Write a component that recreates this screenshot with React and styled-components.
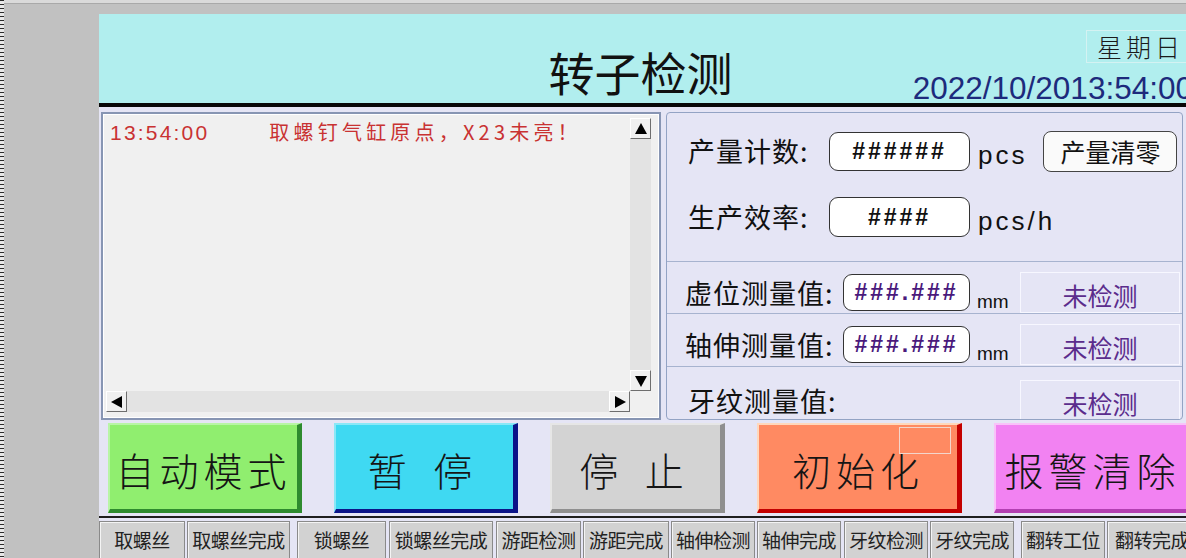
import React from 'react';
import styled, { createGlobalStyle } from 'styled-components';

const GlobalStyle = createGlobalStyle`
  html, body {
    margin: 0;
    padding: 0;
    background: #c1c1c1;
    font-family: "Noto Sans CJK SC", "Liberation Sans", sans-serif;
  }
`;

const Page = styled.div`
  display: flex;
  width: 1186px;
  height: 558px;
  overflow: hidden;
  background: #c1c1c1;
`;

const Ruler = styled.div`
  width: 4px;
  flex-shrink: 0;
  background: repeating-linear-gradient(
    to bottom,
    #2a2a2a 0px,
    #2a2a2a 1px,
    #e8e8e8 1px,
    #e8e8e8 4px
  );
`;

const Desk = styled.div`
  flex: 1;
  display: flex;
  flex-direction: column;
  min-width: 0;
`;

const TopStrip = styled.div`
  height: 3px;
  flex-shrink: 0;
  background: #dadada;
  border-bottom: 1px solid #a9a9a9;
`;

const Screen = styled.div`
  margin: 10px 0 0 95px;
  width: 1087px;
  flex: 1;
  flex-shrink: 0;
  display: flex;
  flex-direction: column;
  background: #e5e5f5;
  min-height: 0;
`;

const Header = styled.div`
  height: 89px;
  flex-shrink: 0;
  background: #b1eeee;
  display: grid;
  grid-template-columns: 1fr auto 1fr;
`;

const Title = styled.div`
  grid-column: 2;
  align-self: end;
  padding: 0 4px 4px 0;
  font-size: 46px;
  line-height: 58px;
  color: #111;
`;

const Clock = styled.div`
  grid-column: 3;
  display: flex;
  flex-direction: column;
  align-items: flex-end;
  padding-top: 16px;
  margin-right: -9px;
`;

const Weekday = styled.div`
  width: 98px;
  height: 31px;
  padding-left: 10px;
  border: 1px solid #d4f2f2;
  border-right: none;
  font-size: 25px;
  font-weight: 300;
  line-height: 31px;
  letter-spacing: 4px;
  color: #1a1a1a;
`;

const DateText = styled.div`
  margin-top: 9px;
  margin-right: 2px;
  font-family: "Liberation Sans", Arial, sans-serif;
  font-size: 31.5px;
  line-height: 32px;
  color: #1d2a7c;
`;

const HeaderBar = styled.div`
  height: 4px;
  flex-shrink: 0;
  background: #080808;
`;

const MainRow = styled.div`
  display: flex;
  gap: 5px;
  height: 308px;
  padding: 5px 0 0 2px;
  flex-shrink: 0;
`;

const LogPanel = styled.div`
  width: 560px;
  flex-shrink: 0;
  box-sizing: border-box;
  border: 2px solid #8795b3;
  box-shadow: inset 0 0 0 1px #ffffff;
  background: #f0f0f0;
  padding: 4px 8px 6px 3px;
  display: grid;
  grid-template-columns: 1fr 21px;
  grid-template-rows: 1fr 21px;
`;

const LogText = styled.div`
  padding: 1px 0 0 4px;
  display: flex;
  gap: 60px;
  color: #c93232;
  line-height: 26px;
  align-items: baseline;
  height: fit-content;
  white-space: nowrap;
`;

const LogTime = styled.span`
  font-family: "Liberation Sans", Arial, sans-serif;
  font-size: 21px;
  letter-spacing: 2.2px;
`;

const LogMsg = styled.span`
  font-size: 20px;
  letter-spacing: 4.2px;
`;

const ScrollTrack = styled.div`
  display: flex;
  flex-direction: ${p => (p.$vertical ? 'column' : 'row')};
  justify-content: space-between;
  background: #e3e3e3;
`;

const ArrowBtn = styled.div`
  width: 21px;
  height: 21px;
  box-sizing: border-box;
  display: flex;
  align-items: center;
  justify-content: center;
  background: #f0f0f0;
  border-top: 1px solid #ffffff;
  border-left: 1px solid #ffffff;
  border-right: 1px solid #6e6e6e;
  border-bottom: 1px solid #6e6e6e;
`;

const InfoPanel = styled.div`
  width: 517px;
  flex-shrink: 0;
  box-sizing: border-box;
  border: 1px solid #93a3c4;
  border-radius: 4px;
  background: #e5e5f5;
  display: flex;
  flex-direction: column;
  overflow: hidden;
`;

const TopSection = styled.div`
  height: 148px;
  flex-shrink: 0;
  padding: 18px 0 0 21px;
  box-sizing: border-box;
  display: flex;
  flex-direction: column;
  gap: 26px;
`;

const FieldRow = styled.div`
  display: flex;
  align-items: center;
  height: 40px;
`;

const Label = styled.div`
  width: ${p => p.$w}px;
  flex-shrink: 0;
  font-size: ${p => p.$size || 24}px;
  letter-spacing: ${p => p.$ls || 0}px;
  color: #111;
  line-height: 40px;
  white-space: nowrap;
`;

const ValueBox = styled.div`
  width: ${p => p.$w}px;
  height: ${p => p.$h}px;
  flex-shrink: 0;
  box-sizing: border-box;
  border: 1px solid #333;
  border-radius: 9px;
  background: #ffffff;
  display: flex;
  align-items: center;
  justify-content: center;
  font-family: "Liberation Sans", Arial, sans-serif;
  font-weight: bold;
  font-size: 23px;
  letter-spacing: ${p => p.$ls || 1}px;
  color: ${p => p.$color || '#111'};
`;

const Unit = styled.div`
  font-family: "Liberation Sans", Arial, sans-serif;
  font-size: ${p => p.$size || 26}px;
  letter-spacing: ${p => p.$ls ?? 3}px;
  color: #111;
  margin-left: ${p => p.$ml || 8}px;
  align-self: ${p => p.$self || 'center'};
  padding-top: ${p => p.$pt ?? 8}px;
`;

const ClearBtn = styled.div`
  margin-left: 16px;
  width: 134px;
  height: 41px;
  box-sizing: border-box;
  border: 1px solid #444;
  border-radius: 8px;
  background: #fafafa;
  display: flex;
  align-items: center;
  justify-content: center;
  font-size: 25px;
  color: #111;
`;

const MeasureRow = styled.div`
  height: ${p => p.$h}px;
  flex-shrink: 0;
  box-sizing: border-box;
  border-top: 1px solid #a7b3cf;
  display: flex;
  align-items: flex-end;
  padding-left: ${p => p.$pl || 18}px;
`;

const MeasureInner = styled.div`
  display: flex;
  align-items: center;
  height: 41px;
  width: 100%;
  margin-bottom: ${p => p.$mb || 0}px;
`;

const Status = styled.div`
  margin-left: auto;
  margin-right: 2px;
  width: 160px;
  height: 41px;
  flex-shrink: 0;
  box-sizing: border-box;
  border: 1px solid #f7f7ff;
  display: flex;
  align-items: center;
  justify-content: center;
  font-size: 25px;
  color: #5b2c8c;
  padding-top: 4px;
`;

const ButtonRow = styled.div`
  height: 96px;
  box-sizing: border-box;
  flex-shrink: 0;
  padding: 3px 0 0 9px;
  display: flex;
  gap: 32px;
  align-items: flex-start;
`;

const BigButton = styled.div`
  position: relative;
  width: ${p => p.$w}px;
  height: 90px;
  flex-shrink: 0;
  box-sizing: border-box;
  background: ${p => p.$bg};
  border-top: 2px solid ${p => p.$light};
  border-left: 2px solid ${p => p.$light};
  border-right: 5px solid ${p => p.$dark};
  border-bottom: 4px solid ${p => p.$dark};
  display: flex;
  align-items: center;
  justify-content: center;
  font-size: 39px;
  font-weight: 300;
  letter-spacing: ${p => p.$ls || 5}px;
  color: #151515;
  white-space: pre;
  padding-top: 4px;
`;

const GhostFrame = styled.div`
  position: absolute;
  top: 2px;
  right: 6px;
  width: 50px;
  height: 25px;
  border: 1px solid #f3d6cc;
`;

const BottomBar = styled.div`
  flex: 1;
  border-top: 2px solid #1e1e1e;
  padding-top: 3px;
  display: flex;
  gap: 2px;
  min-height: 0;
`;

const SmallButton = styled.div`
  width: ${p => p.$w}px;
  margin-left: ${p => p.$ml || 0}px;
  height: 40px;
  flex-shrink: 0;
  box-sizing: border-box;
  background: #d2d2d2;
  border: 1px solid #8a8a8a;
  box-shadow: inset 1px 1px 0 #f4f4f4;
  display: flex;
  align-items: center;
  justify-content: center;
  font-size: 19px;
  letter-spacing: -0.5px;
  color: #222;
  white-space: nowrap;
  overflow: hidden;
  padding-bottom: 4px;
`;

const Arrow = ({ dir }) => {
  const pts = {
    up: '3,14 15,14 9,3',
    down: '3,4 15,4 9,15',
    left: '14,3 14,15 3,9',
    right: '4,3 4,15 15,9',
  }[dir];
  return (
    <svg width="18" height="18" viewBox="0 0 18 18">
      <polygon points={pts} fill="#000" />
    </svg>
  );
};

const bigButtons = [
  { text: '自动模式', w: 194, bg: '#90ee6f', dark: '#2e8b2e', light: '#b8f5a6' },
  { text: '暂 停', w: 184, bg: '#3fd9f2', dark: '#0b1488', light: '#8ae8f7', ls: 9 },
  { text: '停 止', w: 175, bg: '#d3d3d3', dark: '#8f8f8f', light: '#e6e6e6', ls: 9 },
  { text: '初始化', w: 205, bg: '#ff8a62', dark: '#c40000', light: '#ffd8bc', ghost: true },
  { text: '报警清除', w: 200, bg: '#f282f2', dark: '#b23fb2', light: '#f9c2f9' },
];

const smallButtons = [
  { text: '取螺丝', w: 86 },
  { text: '取螺丝完成', w: 103 },
  { text: '锁螺丝', w: 89, ml: 5 },
  { text: '锁螺丝完成', w: 104, ml: 1 },
  { text: '游距检测', w: 85, ml: 1 },
  { text: '游距完成', w: 86 },
  { text: '轴伸检测', w: 84 },
  { text: '轴伸完成', w: 84 },
  { text: '牙纹检测', w: 84, ml: 1 },
  { text: '牙纹完成', w: 84 },
  { text: '翻转工位', w: 84, ml: 5 },
  { text: '翻转完成', w: 90 },
];

export default function App() {
  return (
    <>
      <GlobalStyle />
      <Page>
        <Ruler />
        <Desk>
          <TopStrip />
          <Screen>
            <Header>
              <Title>转子检测</Title>
              <Clock>
                <Weekday>星期日</Weekday>
                <DateText>2022/10/2013:54:00</DateText>
              </Clock>
            </Header>
            <HeaderBar />
            <MainRow>
              <LogPanel>
                <LogText>
                  <LogTime>13:54:00</LogTime>
                  <LogMsg>取螺钉气缸原点，X23未亮！</LogMsg>
                </LogText>
                <ScrollTrack $vertical>
                  <ArrowBtn><Arrow dir="up" /></ArrowBtn>
                  <ArrowBtn><Arrow dir="down" /></ArrowBtn>
                </ScrollTrack>
                <ScrollTrack>
                  <ArrowBtn><Arrow dir="left" /></ArrowBtn>
                  <ArrowBtn><Arrow dir="right" /></ArrowBtn>
                </ScrollTrack>
              </LogPanel>
              <InfoPanel>
                <TopSection>
                  <FieldRow>
                    <Label $w={141} $size={27} $ls={1}>产量计数:</Label>
                    <ValueBox $w={141} $h={39} $ls={3}>######</ValueBox>
                    <Unit>pcs</Unit>
                    <ClearBtn>产量清零</ClearBtn>
                  </FieldRow>
                  <FieldRow>
                    <Label $w={141} $size={27} $ls={1}>生产效率:</Label>
                    <ValueBox $w={141} $h={40} $ls={3}>####</ValueBox>
                    <Unit>pcs/h</Unit>
                  </FieldRow>
                </TopSection>
                <MeasureRow $h={52}>
                  <MeasureInner>
                    <Label $w={158} $size={27} $ls={1}>虚位测量值:</Label>
                    <ValueBox $w={127} $h={37} $color="#4a1a7c" $ls={3}>###.###</ValueBox>
                    <Unit $size={19} $ml={7} $self="flex-end" $pt={0} $ls={0}>mm</Unit>
                    <Status>未检测</Status>
                  </MeasureInner>
                </MeasureRow>
                <MeasureRow $h={53}>
                  <MeasureInner $mb={1}>
                    <Label $w={158} $size={27} $ls={1}>轴伸测量值:</Label>
                    <ValueBox $w={127} $h={37} $color="#4a1a7c" $ls={3}>###.###</ValueBox>
                    <Unit $size={19} $ml={7} $self="flex-end" $pt={0} $ls={0}>mm</Unit>
                    <Status>未检测</Status>
                  </MeasureInner>
                </MeasureRow>
                <MeasureRow $h={54} $pl={21}>
                  <MeasureInner $mb={-1}>
                    <Label $w={158} $size={27} $ls={1}>牙纹测量值:</Label>
                    <Status>未检测</Status>
                  </MeasureInner>
                </MeasureRow>
              </InfoPanel>
            </MainRow>
            <ButtonRow>
              {bigButtons.map(b => (
                <BigButton key={b.text} $w={b.w} $bg={b.bg} $dark={b.dark} $light={b.light} $ls={b.ls}>
                  {b.text}
                  {b.ghost && <GhostFrame />}
                </BigButton>
              ))}
            </ButtonRow>
            <BottomBar>
              {smallButtons.map(b => (
                <SmallButton key={b.text} $w={b.w} $ml={b.ml}>{b.text}</SmallButton>
              ))}
            </BottomBar>
          </Screen>
        </Desk>
      </Page>
    </>
  );
}
